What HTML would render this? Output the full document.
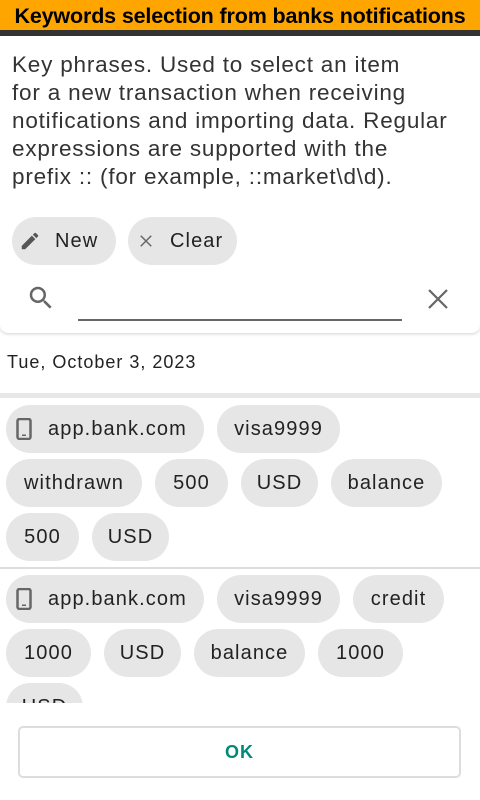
<!DOCTYPE html>
<html><head><meta charset="utf-8"><style>
*{margin:0;padding:0;box-sizing:border-box}
body{width:480px;height:800px;position:relative;background:#fff;font-family:"Liberation Sans",sans-serif;overflow:hidden;color:#222}
.a{position:absolute}
.title{left:0;top:0;width:480px;height:30px;background:#ffa500;font-weight:bold;font-size:21.5px;text-align:center;line-height:32px;color:#000;letter-spacing:-0.15px;white-space:nowrap}
.bar{left:0;top:30px;width:480px;height:6px;background:#333}
.desc{left:12px;top:51px;font-size:22.5px;line-height:28px;color:#333;white-space:nowrap;letter-spacing:0.8px}
.chip{position:absolute;height:48px;border-radius:24px;background:#e6e6e6;font-size:20px;line-height:48px;color:#222;text-align:center;white-space:nowrap;letter-spacing:1.1px}
.card{left:0;top:36px;width:480px;height:297px;border-radius:0 0 8px 8px;box-shadow:0 1px 3px rgba(0,0,0,.18)}
.app{text-align:left;padding-left:42px}
</style></head><body>
<div class="a card"></div>
<div class="a title">Keywords selection from banks notifications</div>
<div class="a bar"></div>
<div class="a desc">Key phrases. Used to select an item<br>for a new transaction when receiving<br>notifications and importing data. Regular<br>expressions are supported with the<br>prefix :: (for example, ::market\d\d).</div>

<div class="chip" style="left:12px;top:217px;width:104px;text-align:left;padding-left:43px">New</div>
<svg class="a" style="left:19px;top:230px" width="22" height="22" viewBox="0 0 24 24"><path fill="#555" d="M3 17.25V21h3.75L17.81 9.94l-3.75-3.75L3 17.25zM20.71 7.04a1 1 0 000-1.41l-2.34-2.34a1 1 0 00-1.41 0l-1.83 1.83 3.75 3.75 1.83-1.83z"/></svg>
<div class="chip" style="left:128px;top:217px;width:109px;text-align:left;padding-left:42px">Clear</div>
<svg class="a" style="left:137px;top:232px" width="18" height="18" viewBox="0 0 24 24"><path stroke="#666" stroke-width="2" d="M5 5L19 19M19 5L5 19"/></svg>

<svg class="a" style="left:26px;top:283px" width="30" height="30" viewBox="0 0 24 24"><path fill="#666" d="M15.5 14h-.79l-.28-.27A6.470 6.470 0 0016 9.5 6.5 6.5 0 109.5 16c1.610 0 3.090-.59 4.230-1.570l.27.28v.79l5 4.990L20.490 19l-4.990-5zm-6 0C7.010 14 5 11.990 5 9.5S7.010 5 9.5 5 14 7.010 14 9.5 11.990 14 9.5 14z"/></svg>
<div class="a" style="left:78px;top:319px;width:324px;height:2px;background:#666"></div>
<svg class="a" style="left:426px;top:287px" width="24" height="24" viewBox="0 0 24 24"><path stroke="#666" stroke-width="2.2" d="M3 3L21 21M21 3L3 21"/></svg>

<div class="a" style="left:7px;top:352px;font-size:18px;color:#222;letter-spacing:1px">Tue, October 3, 2023</div>
<div class="a" style="left:0;top:393px;width:480px;height:5px;background:#e8e8e8"></div>

<div class="chip app" style="left:6px;top:405px;width:198px">app.bank.com</div>
<svg class="a" style="left:16px;top:418px" width="16" height="22" viewBox="0 0 16 22"><rect x="1.5" y="1" width="13" height="20" rx="2" fill="none" stroke="#666" stroke-width="2.5"/><rect x="6" y="16.5" width="4" height="1.5" fill="#666"/></svg>
<div class="chip" style="left:217px;top:405px;width:123px">visa9999</div>
<div class="chip" style="left:6px;top:459px;width:136px">withdrawn</div>
<div class="chip" style="left:155px;top:459px;width:73px">500</div>
<div class="chip" style="left:241px;top:459px;width:77px">USD</div>
<div class="chip" style="left:331px;top:459px;width:111px">balance</div>
<div class="chip" style="left:6px;top:513px;width:73px">500</div>
<div class="chip" style="left:92px;top:513px;width:77px">USD</div>

<div class="a" style="left:0;top:567px;width:480px;height:2px;background:#ddd"></div>

<div class="chip app" style="left:6px;top:575px;width:198px">app.bank.com</div>
<svg class="a" style="left:16px;top:588px" width="16" height="22" viewBox="0 0 16 22"><rect x="1.5" y="1" width="13" height="20" rx="2" fill="none" stroke="#666" stroke-width="2.5"/><rect x="6" y="16.5" width="4" height="1.5" fill="#666"/></svg>
<div class="chip" style="left:217px;top:575px;width:123px">visa9999</div>
<div class="chip" style="left:353px;top:575px;width:91px">credit</div>
<div class="chip" style="left:6px;top:629px;width:85px">1000</div>
<div class="chip" style="left:104px;top:629px;width:77px">USD</div>
<div class="chip" style="left:194px;top:629px;width:111px">balance</div>
<div class="chip" style="left:318px;top:629px;width:85px">1000</div>
<div class="a" style="left:0;top:683px;width:480px;height:20px;overflow:hidden"><div class="chip" style="left:6px;top:0;width:77px">USD</div></div>

<div class="a" style="left:18px;top:726px;width:443px;height:52px;border:2px solid #ddd;border-radius:5px;text-align:center;line-height:48px;font-size:18px;font-weight:bold;color:#00897b;letter-spacing:1px">OK</div>
</body></html>
